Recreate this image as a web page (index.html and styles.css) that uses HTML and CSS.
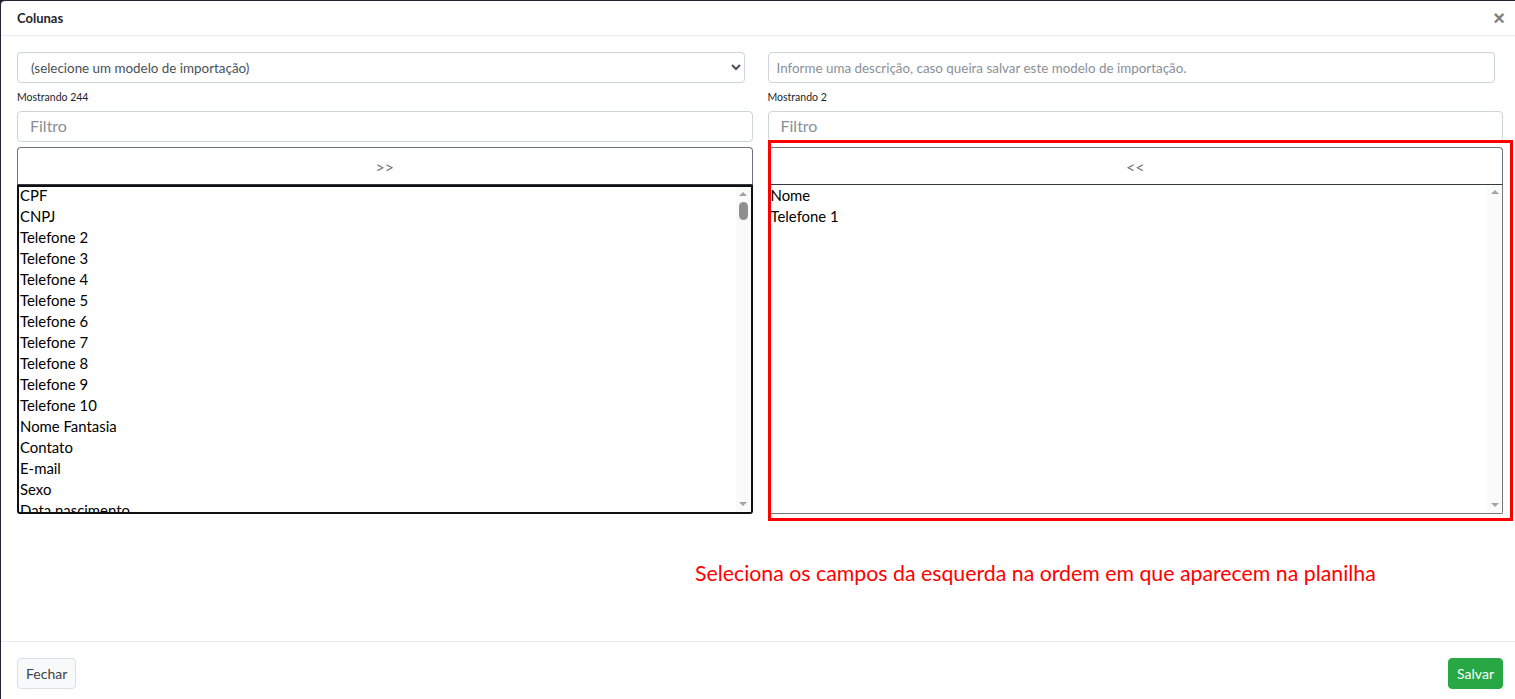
FILE: index.html
```html
<!DOCTYPE html>
<html lang="pt-BR">
<head>
    <meta charset="UTF-8">
    <meta name="viewport" content="width=device-width, initial-scale=1.0">
    <title>Colunas</title>
    <link rel="stylesheet" href="styles.css">
</head>
<body>

<div class="modal">
    <div class="modal-header">
        <h5 class="modal-title">Colunas</h5>
        <button class="close">&times;</button>
    </div>

    <div class="modal-body">
        <!-- modelo -->
        <div class="row top-row">
            <div class="col">
                <select class="form-control-sm model-select">
                    <option>(selecione um modelo de importação)</option>
                </select>
            </div>
            <div class="col">
                <input class="form-control-sm" type="text" placeholder="Informe uma descrição, caso queira salvar este modelo de importação.">
            </div>
        </div>

        <div class="row">
            <!-- colunas disponiveis -->
            <div class="col">
                <div class="count">Mostrando 244</div>
                <input class="filter" type="text" placeholder="Filtro">
                <button class="move-btn">&gt;&gt;</button>
                <div class="listbox listbox-focus">
                    <div class="options">
                        <div>CPF</div>
                        <div>CNPJ</div>
                        <div>Telefone 2</div>
                        <div>Telefone 3</div>
                        <div>Telefone 4</div>
                        <div>Telefone 5</div>
                        <div>Telefone 6</div>
                        <div>Telefone 7</div>
                        <div>Telefone 8</div>
                        <div>Telefone 9</div>
                        <div>Telefone 10</div>
                        <div>Nome Fantasia</div>
                        <div>Contato</div>
                        <div>E-mail</div>
                        <div>Sexo</div>
                        <div>Data nascimento</div>
                    </div>
                    <div class="scrollbar">
                        <span class="arrow-up"></span>
                        <span class="thumb"></span>
                        <span class="arrow-down"></span>
                    </div>
                </div>
            </div>

            <!-- colunas selecionadas -->
            <div class="col">
                <div class="count">Mostrando 2</div>
                <input class="filter" type="text" placeholder="Filtro">
                <div class="picked">
                    <button class="move-btn">&lt;&lt;</button>
                    <div class="listbox">
                        <div class="options">
                            <div>Nome</div>
                            <div>Telefone 1</div>
                        </div>
                        <div class="scrollbar">
                            <span class="arrow-up"></span>
                            <span class="arrow-down"></span>
                        </div>
                    </div>
                </div>
            </div>
        </div>

        <p class="hint">Seleciona os campos da esquerda na ordem em que aparecem na planilha</p>
    </div>

    <div class="modal-footer">
        <button class="btn btn-light">Fechar</button>
        <button class="btn btn-success">Salvar</button>
    </div>
</div>

</body>
</html>
```

FILE: styles.css
```css
body {
    margin: 0;
    background-color: #2a2130;
    font-family: 'Lato', 'Liberation Sans', sans-serif;
    color: #212529;
    overflow: hidden;
}

.modal {
    margin: 1px 0 0 1px;
    width: 1518px;
    height: 704px;
    background-color: #fff;
    border-radius: 4px;
    display: flex;
    flex-direction: column;
}

.modal-header {
    height: 34px;
    padding: 0 14px 0 16px;
    border-bottom: 1px solid #e9ecef;
    display: flex;
    align-items: center;
    justify-content: space-between;
}

.modal-title {
    margin: 0;
    font-size: 13px;
    font-weight: 700;
}

.close {
    border: none;
    background: none;
    padding: 0;
    font-family: 'Liberation Sans', sans-serif;
    font-size: 20px;
    font-weight: 700;
    color: #000;
    opacity: 0.5;
    line-height: 1;
}

.modal-body {
    flex: 1;
    padding: 16px 16px 0 16px;
}

.row {
    display: grid;
    grid-template-columns: 1fr 1fr;
    column-gap: 15px;
}

.form-control-sm {
    display: block;
    box-sizing: border-box;
    width: calc(100% - 8px);
    height: 31px;
    padding: 4px 8px;
    font-family: inherit;
    font-size: 13.4px;
    color: #495057;
    background-color: #fff;
    border: 1px solid #ced4da;
    border-radius: 4px;
}

.form-control-sm::placeholder {
    color: #8a9097;
}

.model-select {
    padding-left: 9px;
}

.count {
    font-size: 10.5px;
    line-height: 16px;
    padding: 6px 0 6px 0;
    color: #212529;
}

.filter {
    display: block;
    box-sizing: border-box;
    width: 100%;
    height: 31px;
    padding: 3px 12px 5px 12px;
    font-family: inherit;
    font-size: 16px;
    border: 1px solid #ced4da;
    border-radius: 4px;
}

.filter::placeholder {
    color: #8a9097;
}

.move-btn {
    display: block;
    box-sizing: border-box;
    width: 100%;
    height: 38px;
    margin-top: 5px;
    background-color: #fff;
    border: 1px solid #6c757d;
    border-bottom-color: #343a40;
    border-radius: 4px 4px 0 0;
    font-family: inherit;
    font-size: 16px;
    color: #6c757d;
}

.listbox {
    box-sizing: border-box;
    height: 329px;
    display: flex;
    border: 1px solid #767676;
    border-top: none;
    border-radius: 0 0 2px 2px;
    font-size: 14.9px;
    color: #000;
}

.listbox-focus {
    border: 2px solid #101010;
    border-radius: 0 0 3px 3px;
}

.options {
    flex: 1;
    overflow: hidden;
    padding: 0 2px;
}

.listbox-focus .options {
    padding: 0 1px;
    margin-top: -2px;
}

.options div {
    line-height: 21px;
}

.scrollbar {
    width: 15px;
    background-color: #fafafa;
    display: flex;
    flex-direction: column;
    align-items: center;
}

.arrow-up,
.arrow-down {
    width: 0;
    height: 0;
    border-left: 4px solid transparent;
    border-right: 4px solid transparent;
}

.arrow-up {
    margin-top: 5px;
    border-bottom: 4px solid #a3a3a3;
}

.arrow-down {
    margin-top: auto;
    margin-bottom: 6px;
    border-top: 4px solid #a3a3a3;
}

.thumb {
    width: 9px;
    height: 18px;
    margin-top: 6px;
    background-color: #8f8f8f;
    border-radius: 5px;
}

.picked {
    position: relative;
}

.picked::after {
    content: '';
    position: absolute;
    top: -7px;
    left: 0;
    right: -10px;
    bottom: -7px;
    border: 3px solid #ff0000;
    pointer-events: none;
}

.hint {
    margin: 46px 0 0 678px;
    font-size: 21.3px;
    line-height: 26px;
    color: #ff0000;
}

.modal-footer {
    padding: 16px;
    border-top: 1px solid #e9ecef;
    display: flex;
    justify-content: space-between;
}

.btn {
    height: 31px;
    padding: 0 8px;
    font-family: inherit;
    font-size: 14px;
    border-radius: 4px;
}

.btn-light {
    background-color: #f8f9fa;
    border: 1px solid #dcdfe3;
    color: #3d4246;
}

.btn-success {
    background-color: #28a745;
    border: 1px solid #28a745;
    color: #fff;
}
```
